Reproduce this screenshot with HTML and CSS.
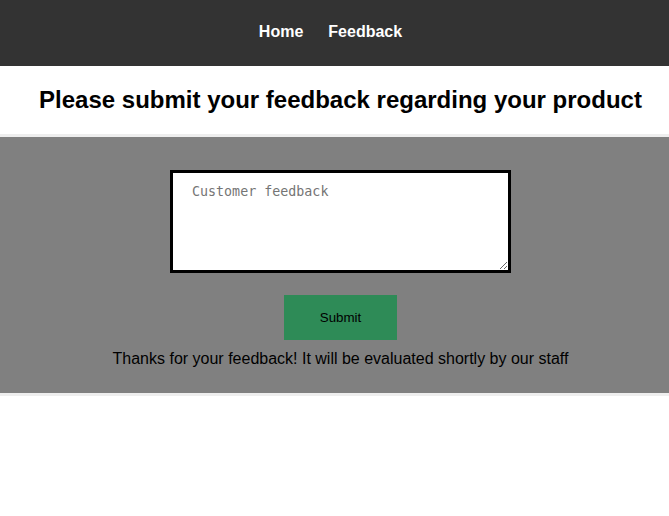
FILE: index.html
```html
<!DOCTYPE html>
<html>
<head>
<meta charset="utf-8">
<link rel="stylesheet" href="styles.css">
</head>
<body>
<nav class="topnav">
  <a class="navlink" href="#">Home</a>
  <a class="navlink" href="#">Feedback</a>
</nav>
<header class="title-bar">
  <h1 class="title">Please submit your feedback regarding your product</h1>
</header>
<main class="feedback">
  <textarea class="feedback-input" placeholder="Customer feedback"></textarea>
  <button class="submit-btn">Submit</button>
  <p class="thanks">Thanks for your feedback! It will be evaluated shortly by our staff</p>
</main>
</body>
</html>
```
FILE: styles.css
```css
html, body {
  margin: 0;
  padding: 0;
  background: #fff;
  font-family: "Liberation Sans", Arial, sans-serif;
}
.topnav {
  height: 66px;
  background: #333333;
  display: flex;
  justify-content: center;
  align-items: center;
  gap: 25px;
  padding-right: 8px;
  box-sizing: border-box;
}
.navlink {
  color: #fff;
  font-weight: bold;
  font-size: 16px;
  text-decoration: none;
  line-height: 18px;
  margin-top: -2px;
}
.title-bar {
  height: 71px;
  box-sizing: border-box;
  border-bottom: 3px solid #eeeeee;
  display: flex;
  align-items: center;
  justify-content: center;
  padding-left: 12px;
}
.title {
  margin: 0;
  font-size: 24px;
  font-weight: bold;
  color: #000;
  line-height: 28px;
}
.feedback {
  background: #808080;
  border-bottom: 3px solid #eeeeee;
  display: flex;
  flex-direction: column;
  align-items: center;
  padding: 33px 0 0 12px;
  height: 259px;
  box-sizing: border-box;
}
.feedback-input {
  width: 341px;
  height: 103px;
  box-sizing: border-box;
  border: 3px solid #000;
  background: #fff;
  padding: 11px 19px 10px;
  font-family: "DejaVu Sans Mono", monospace;
  font-size: 13.33px;
  margin: 0;
  outline: none;
}
.feedback-input::placeholder {
  color: #757575;
}
.submit-btn {
  margin-top: 22px;
  width: 113px;
  height: 45px;
  background: #2e8b57;
  border: none;
  color: #000;
  font-family: "Liberation Sans", Arial, sans-serif;
  font-size: 13.33px;
  padding: 0;
}
.thanks {
  margin: 9px 0 0;
  font-size: 16px;
  line-height: 20px;
  color: #000;
}
```
